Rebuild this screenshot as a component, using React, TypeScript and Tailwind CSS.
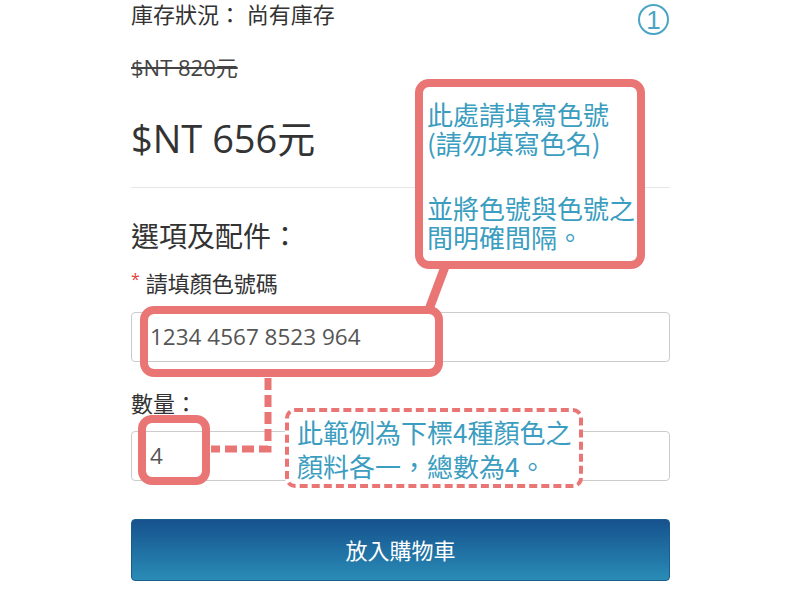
export default function App() {
  return (
    <div className="relative w-[800px] h-[600px] overflow-hidden bg-white text-[#333] font-['Open_Sans','Noto_Sans_CJK_TC',sans-serif]">
      {/* Product form */}
      <div className="ml-[131px] w-[539px]">
        <div className="flex items-start justify-between">
          <p className="text-[22px] leading-[28px]">庫存狀況： 尚有庫存</p>
          <div className="mt-[4px] mr-[1px] flex h-[31px] w-[31px] items-center justify-center rounded-full border-2 border-[#4aa5c4] text-[26px] leading-none text-[#4aa5c4] font-['Liberation_Sans',sans-serif]">
            1
          </div>
        </div>

        <p className="mt-[18px] text-[22px] leading-[28px] text-[#444] line-through">$NT 820元</p>
        <p className="mt-[33px] text-[38px] leading-[48px]">$NT 656元</p>

        <div className="mt-[25px] border-t border-[#e6e6e6]" />

        <h3 className="mt-[30px] text-[28px] leading-[36px]">選項及配件：</h3>

        <p className="mt-[15px] flex items-start text-[22px] leading-[28px]">
          <span className="mr-[6px] text-[16px] leading-[20px] text-[#e0443c]">*</span>
          請填顏色號碼
        </p>
        <div className="mt-[15px] flex h-[50px] items-center rounded-[4px] border border-[#cccccc] pl-[18px] text-[22.5px] text-[#555]">
          1234 4567 8523 964
        </div>

        <p className="mt-[27px] text-[22px] leading-[28px]">數量：</p>
        <div className="mt-[14px] flex h-[50px] items-center rounded-[4px] border border-[#cccccc] pl-[18px] text-[22.5px] text-[#555]">
          4
        </div>

        <button className="mt-[38px] flex h-[62px] w-full items-center justify-center rounded-[4px] border border-[#1b5d8c] bg-gradient-to-b from-[#17528e] to-[#2a8cb6] text-[22px] text-white">
          放入購物車
        </button>
      </div>

      {/* Annotations */}
      <svg className="absolute left-0 top-0" width="800" height="600">
        <line x1="446" y1="264" x2="428" y2="312" stroke="#e97575" strokeWidth="9" />
        <path d="M268 378 L268 449 L211 449" fill="none" stroke="#e97575" strokeWidth="7" strokeDasharray="12 5" />
      </svg>

      <div className="absolute left-[415px] top-[79px] h-[190px] w-[230px] rounded-[14px] border-[8px] border-[#e97575] bg-white pl-[4px] pt-[12px] text-[26px] leading-[29px] whitespace-nowrap text-[#3b9dc0] font-['Noto_Sans_CJK_TC',sans-serif]">
        <p>此處請填寫色號</p>
        <p>(請勿填寫色名)</p>
        <p className="mt-[36px]">並將色號與色號之</p>
        <p>間明確間隔。</p>
      </div>

      <div className="absolute left-[140px] top-[306px] h-[71px] w-[303px] rounded-[14px] border-[8px] border-[#e97575]" />
      <div className="absolute left-[138px] top-[415px] h-[70px] w-[72px] rounded-[14px] border-[8px] border-[#e97575]" />

      <div className="absolute left-[285px] top-[408px] h-[80px] w-[298px] rounded-[10px] border-[4px] border-dashed border-[#e97575] bg-white pl-[8px] pt-[3px] text-[26px] leading-[34px] whitespace-nowrap text-[#3b9dc0] font-['Noto_Sans_CJK_TC',sans-serif]">
        <p>此範例為下標4種顏色之</p>
        <p>顏料各一，總數為4。</p>
      </div>
    </div>
  );
}
